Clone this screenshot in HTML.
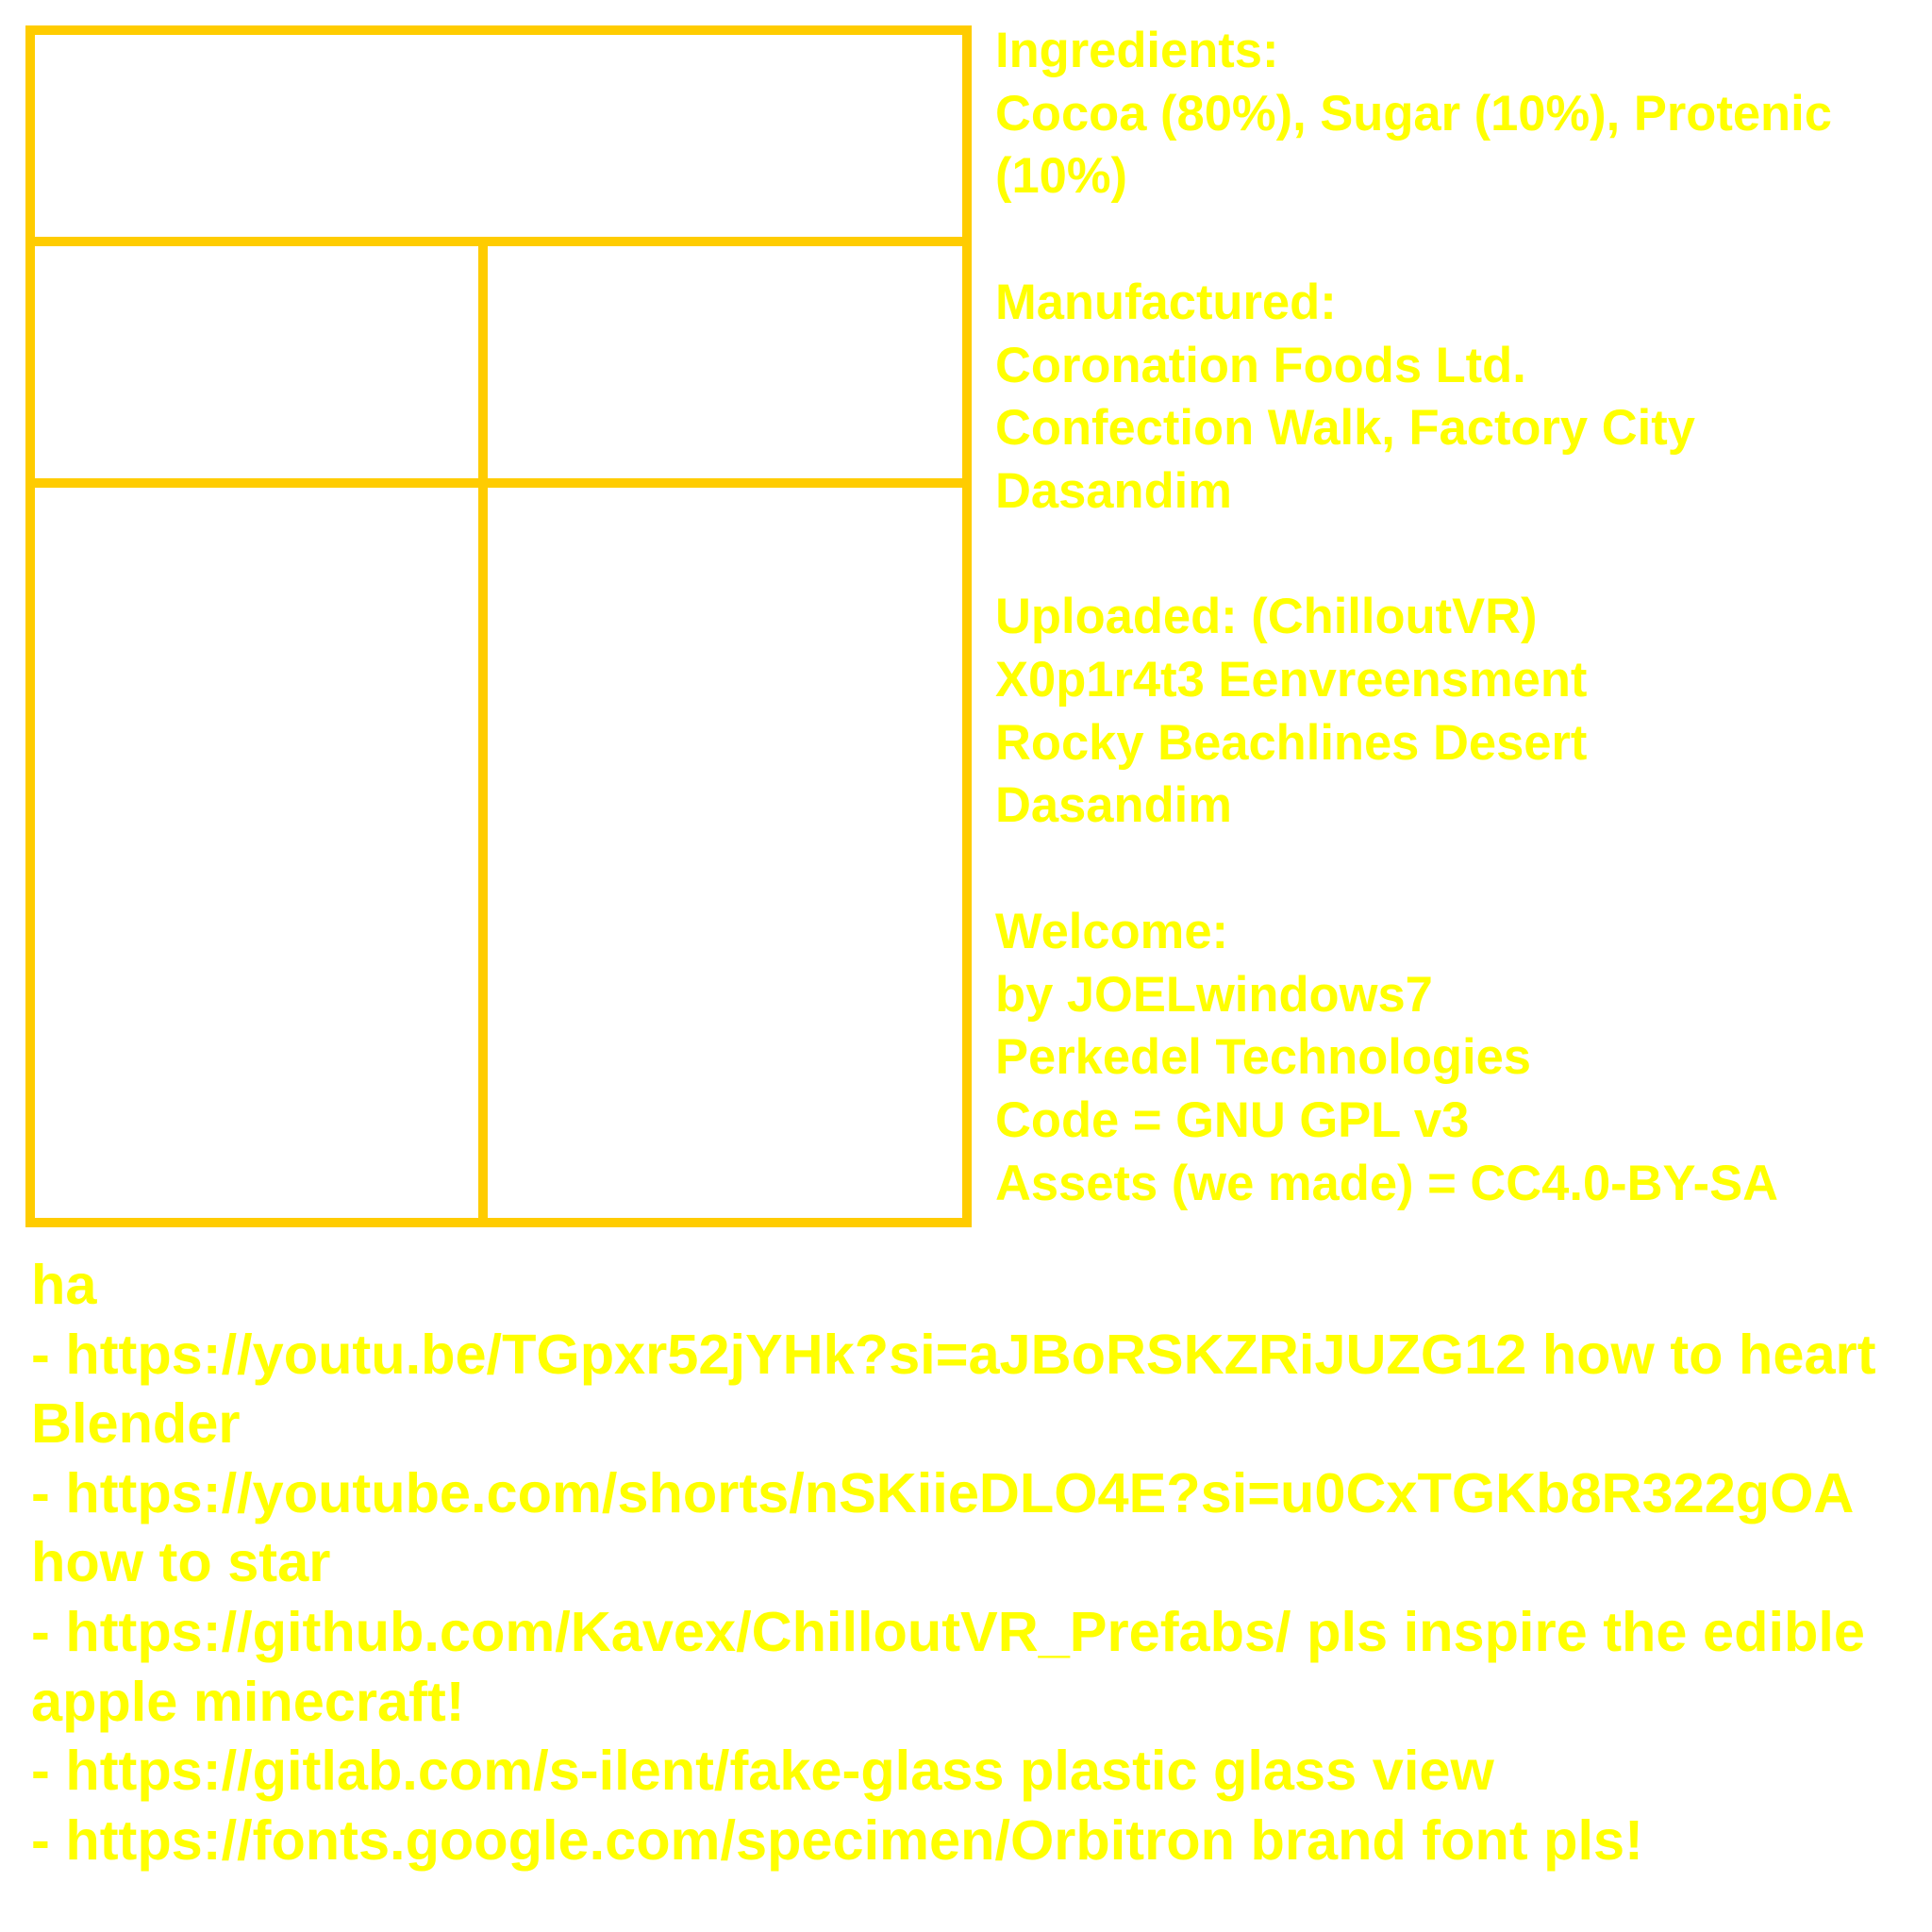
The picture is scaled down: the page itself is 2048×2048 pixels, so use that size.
<!DOCTYPE html>
<html><head><meta charset="utf-8"><style>
html,body{margin:0;padding:0;background:#fff;width:2048px;height:2048px;overflow:hidden}
.b{position:absolute;background:#FFCC00}
.t{position:absolute;font-family:"Liberation Sans",sans-serif;font-weight:bold;color:#FFFF00;white-space:pre}
#r{left:1055px;top:21px;font-size:52.5px;line-height:66.7px}
#d{left:33px;top:1325px;font-size:59.5px;line-height:73.6px}
</style></head><body>
<div class="b" style="left:27px;top:27px;width:1003px;height:10px"></div>
<div class="b" style="left:27px;top:1291px;width:1003px;height:10px"></div>
<div class="b" style="left:27px;top:27px;width:10px;height:1274px"></div>
<div class="b" style="left:1020px;top:27px;width:10px;height:1274px"></div>
<div class="b" style="left:27px;top:251px;width:1003px;height:10px"></div>
<div class="b" style="left:27px;top:507px;width:1003px;height:10px"></div>
<div class="b" style="left:507px;top:251px;width:10px;height:1050px"></div>
<div class="t" id="r">Ingredients:
Cocoa (80%), Sugar (10%), Protenic
(10%)

Manufactured:
Coronation Foods Ltd.
Confection Walk, Factory City
Dasandim

Uploaded: (ChilloutVR)
X0p1r4t3 Eenvreensment
Rocky Beachlines Desert
Dasandim

Welcome:
by JOELwindows7
Perkedel Technologies
Code = GNU GPL v3
Assets (we made) = CC4.0-BY-SA</div>
<div class="t" id="d">ha
- https://youtu.be/TGpxr52jYHk?si=aJBoRSKZRiJUZG12 how to heart
Blender
- https://youtube.com/shorts/nSKiieDLO4E?si=u0CxTGKb8R322gOA
how to star
- https://github.com/Kavex/ChilloutVR_Prefabs/ pls inspire the edible
apple minecraft!
- https://gitlab.com/s-ilent/fake-glass plastic glass view
- https://fonts.google.com/specimen/Orbitron brand font pls!</div>
</body></html>
